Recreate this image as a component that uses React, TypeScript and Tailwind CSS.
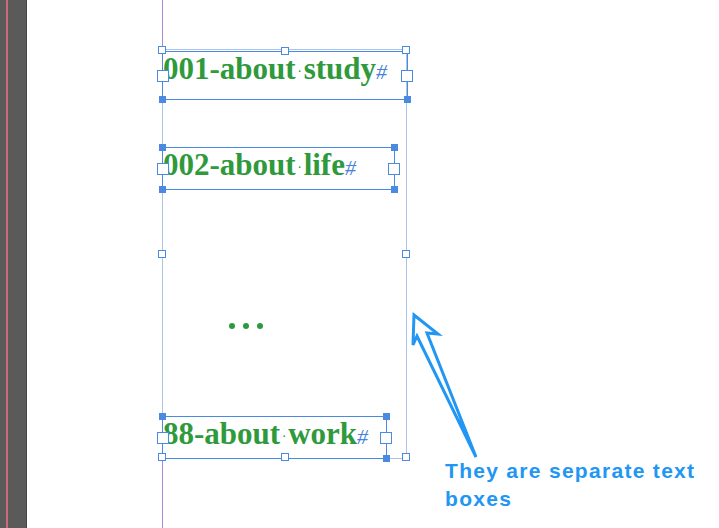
import React from 'react'

const serif = { fontFamily: '"Liberation Serif", "Times New Roman", serif' }

type Kind = 'hollow' | 'filled' | 'port'

function Handle({ kind, pos }: { kind: Kind; pos: string }) {
  const base =
    kind === 'port'
      ? 'w-[12px] h-[12px] bg-white'
      : kind === 'filled'
        ? 'w-[7px] h-[7px] bg-[#4a8ae0]'
        : 'w-[8px] h-[8px] bg-white'
  return <div className={`absolute border border-[#4a8ae0] ${base} ${pos}`} />
}

const corners = {
  tl: '-left-[4px] -top-[4px]',
  tr: '-right-[4px] -top-[4px]',
  bl: '-left-[4px] -bottom-[4px]',
  br: '-right-[4px] -bottom-[4px]',
}

function TextBox({
  className,
  first,
  second,
  handles,
}: {
  className: string
  first: string
  second: string
  handles: (keyof typeof corners)[]
}) {
  return (
    <div className={`relative -ml-px border border-[#4a8ae0] flex items-start shrink-0 ${className}`}>
      <span className="text-[31px] leading-none font-bold text-[#2f9a3c] whitespace-nowrap pt-[1px]" style={serif}>
        {first}
        <span className="inline-block w-[8px] text-center text-[10px] align-middle text-[#3a8a50]">·</span>
        {second}
        <span className="text-[22px] font-normal text-[#4a7fd8] italic">#</span>
      </span>
      {handles.map((h) => (
        <Handle key={h} kind="filled" pos={corners[h]} />
      ))}
      <Handle kind="port" pos="-left-[6px] top-1/2 -translate-y-1/2" />
      <Handle kind="port" pos="-right-[6px] top-1/2 -translate-y-1/2" />
    </div>
  )
}

export default function App() {
  return (
    <div className="relative w-[719px] h-[528px] overflow-hidden bg-white flex">
      {/* pasteboard strip */}
      <div className="w-[27px] h-full shrink-0 bg-[#5a5a5a] border-r border-[#444] pl-[6px]">
        <div className="h-full w-[2px] bg-[#c96a78]" />
      </div>

      {/* page */}
      <div className="relative flex-1 pl-[135px] pt-[49px]">
        {/* margin guide */}
        <div className="absolute left-[135px] top-0 h-full w-px bg-[#a58ad8]" />

        {/* threaded frame */}
        <div className="relative w-[245px] h-[410px] border border-[#a9c4e6] flex flex-col pt-px">
          <TextBox className="w-[246px] h-[49px]" first="001-about" second="study" handles={['bl', 'br']} />
          <TextBox className="w-[233px] h-[43px] mt-[47px]" first="002-about" second="life" handles={['tl', 'tr', 'bl', 'br']} />

          <div className="flex-1 flex justify-start pl-[66px] pt-[133px]">
            <div className="flex gap-[8px] h-[6px]">
              <div className="w-[6px] h-[6px] rounded-full bg-[#2f9a3c]" />
              <div className="w-[6px] h-[6px] rounded-full bg-[#2f9a3c]" />
              <div className="w-[6px] h-[6px] rounded-full bg-[#2f9a3c]" />
            </div>
          </div>

          <TextBox className="w-[225px] h-[43px] -mb-px" first="88-about" second="work" handles={['tl', 'tr', 'br']} />

          {/* frame handles */}
          <Handle kind="hollow" pos="-left-[5px] -top-[4px]" />
          <Handle kind="hollow" pos="left-1/2 -translate-x-1/2 -top-[3px]" />
          <Handle kind="hollow" pos="-right-[4px] -top-[4px]" />
          <Handle kind="hollow" pos="-left-[5px] top-1/2 -translate-y-1/2" />
          <Handle kind="hollow" pos="-right-[4px] top-1/2 -translate-y-1/2" />
          <Handle kind="hollow" pos="-left-[5px] -bottom-[3px]" />
          <Handle kind="hollow" pos="left-1/2 -translate-x-1/2 -bottom-[3px]" />
          <Handle kind="hollow" pos="-right-[4px] -bottom-[3px]" />
        </div>

        {/* annotation */}
        <div
          className="absolute left-[418px] top-[457px] text-[21px] leading-[28px] font-bold tracking-[1.3px] text-[#2196f3]"
          style={{ fontFamily: '"Liberation Sans", Arial, sans-serif' }}
        >
          They are separate text
          <br />
          boxes
        </div>
      </div>

      {/* arrow */}
      <svg className="absolute left-0 top-0 pointer-events-none" width="719" height="528">
        <path
          d="M414 315 L438 334 L427 333 L476 457 L417 336 L413 345 Z"
          fill="none"
          stroke="#2196f3"
          strokeWidth="3"
          strokeLinejoin="miter"
        />
      </svg>
    </div>
  )
}
